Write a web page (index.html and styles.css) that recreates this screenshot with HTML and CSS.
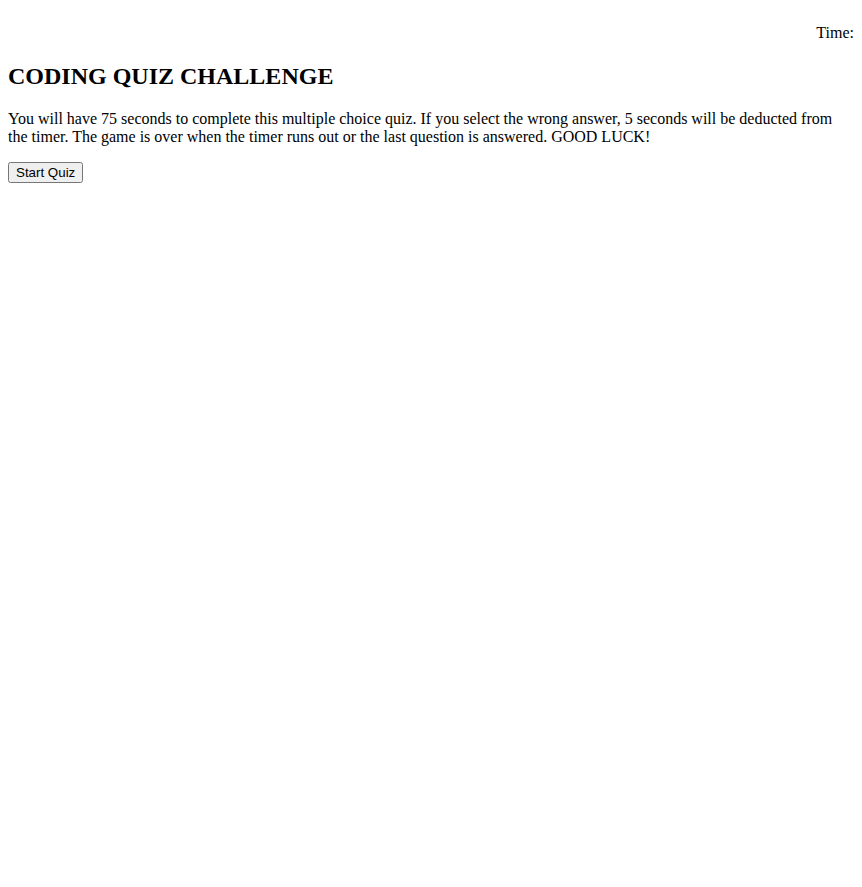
FILE: index.html
```html
<!DOCTYPE html>
<html>
<head>
<meta charset="utf-8">
<title>Coding Quiz</title>
<link rel="stylesheet" href="styles.css">
</head>
<body>
<header class="topbar">
<p class="timer">Time: <span class="time-left"></span></p>
</header>
<main class="intro">
<h2 class="title">CODING QUIZ CHALLENGE</h2>
<p class="instructions">You will have 75 seconds to complete this multiple choice quiz. If you select the wrong answer, 5 seconds will be deducted from the timer. The game is over when the timer runs out or the last question is answered. GOOD LUCK!</p>
<button class="start-btn">Start Quiz</button>
</main>
</body>
</html>
```

FILE: styles.css
```css
body {
  margin: 8px;
  font-family: "Liberation Serif", "Times New Roman", serif;
  font-size: 16px;
  color: #000;
  background: #fff;
}
.timer {
  text-align: right;
  margin: 16px 0;
}
.title {
  font-size: 24px;
  font-weight: bold;
  margin: 20.92px 0 19.92px;
}
.instructions {
  margin: 16px 0;
}
.start-btn {
  font-family: "Liberation Sans", Arial, sans-serif;
  font-size: 13.333px;
}
```
